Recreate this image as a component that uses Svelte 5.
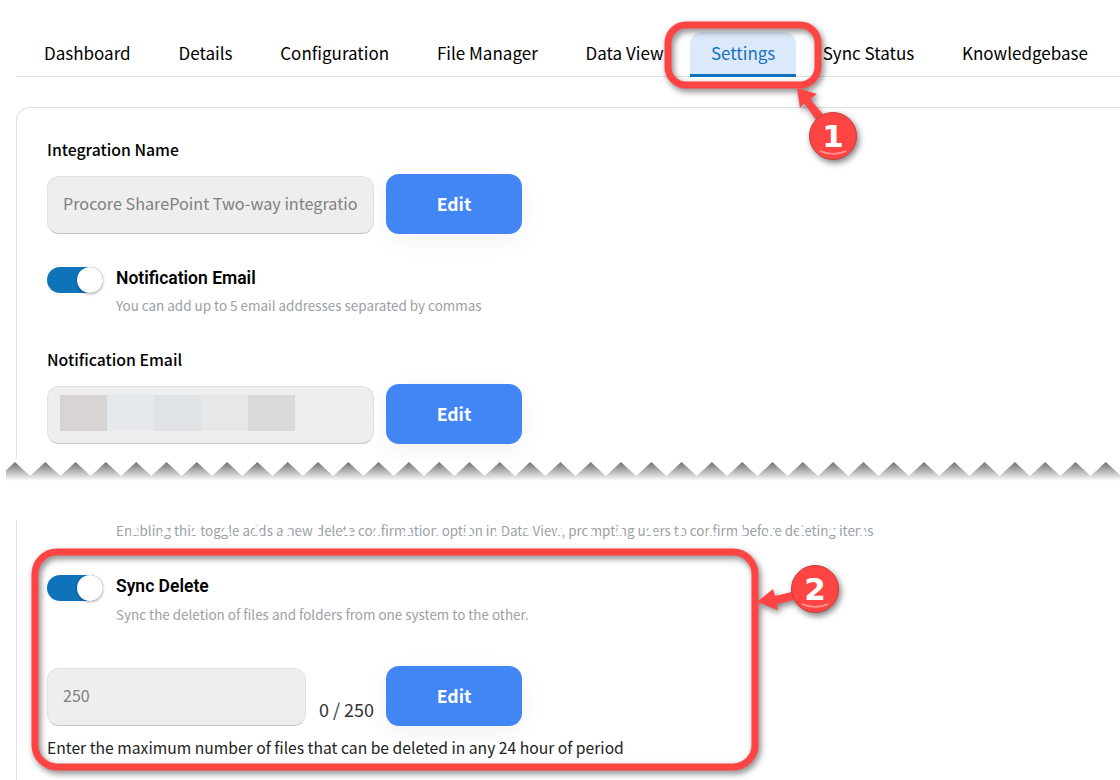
<script lang="ts">
  const tabs = ['Dashboard', 'Details', 'Configuration', 'File Manager', 'Data View', 'Settings', 'Sync Status', 'Knowledgebase'];
  const redacted = ['#d8d4d4', '#e6e9ec', '#dfe3e6', '#e6e7e7', '#dcdad9'];

  // zigzag of the torn paper edge, one tooth every 30.3px
  const tooth = 30.3;
  let edge = 'M-20 0';
  for (let i = 0; i < 40; i++) {
    const x = 15 + (i - 1) * tooth;
    edge += ` L${x} 4 L${x + tooth / 2} 18`;
  }
  edge += ' L1200 0 Z';
</script>

<div class="page">
  <nav class="tabs">
    {#each tabs as tab}
      <span class="tab" class:active={tab === 'Settings'}>{tab}</span>
    {/each}
  </nav>

  <section class="card">
    <div class="label">Integration Name</div>
    <div class="row">
      <input class="field" readonly value="Procore SharePoint Two-way integration" />
      <button class="edit">Edit</button>
    </div>

    <div class="switch-row">
      <span class="toggle"><span class="knob"></span></span>
      <div>
        <div class="switch-title">Notification Email</div>
        <div class="hint">You can add up to 5 email addresses separated by commas</div>
      </div>
    </div>

    <div class="label second">Notification Email</div>
    <div class="row">
      <div class="field redacted">
        {#each redacted as colour}
          <span class="blur" style="background: {colour}"></span>
        {/each}
      </div>
      <button class="edit">Edit</button>
    </div>
  </section>

  <svg class="tear" width="1120" height="30" viewBox="0 0 1120 30" aria-hidden="true">
    <defs>
      <linearGradient id="tear-shade" gradientUnits="userSpaceOnUse" x1="0" y1="4" x2="0" y2="23">
        <stop offset="0" stop-color="#707070" />
        <stop offset="1" stop-color="#fff" />
      </linearGradient>
    </defs>
    <rect x="6" y="0" width="1114" height="30" fill="url(#tear-shade)" />
    <path d={edge} fill="#fff" />
  </svg>

  <section class="lower">
    <div class="torn-text">Enabling this toggle adds a new delete confirmation option in Data View, prompting users to confirm before deleting items</div>

    <div class="switch-row sync">
      <span class="toggle"><span class="knob"></span></span>
      <div>
        <div class="switch-title">Sync Delete</div>
        <div class="hint">Sync the deletion of files and folders from one system to the other.</div>
      </div>
    </div>

    <div class="row limit">
      <input class="field short" readonly value="250" />
      <span class="count">0 / 250</span>
      <button class="edit">Edit</button>
    </div>
    <div class="help">Enter the maximum number of files that can be deleted in any 24 hour of period</div>
  </section>

  <svg class="marks" width="1120" height="780" viewBox="0 0 1120 780" aria-hidden="true">
    <g class="shadowed">
      <rect x="668" y="25" width="150" height="60" rx="18" class="frame" />
      <polygon points="797,88 817,94 810,99 826,118 819,124 804,103 800,108" class="red" />
      <circle cx="833" cy="136" r="23.5" class="badge" />
    </g>
    <path d="M820 151 Q833 157 846 151" class="glint" />
    <text x="833" y="147" class="num">1</text>

    <g class="shadowed">
      <rect x="35" y="552" width="720" height="215" rx="22" class="frame" />
      <polygon points="757,602 773,589 775,596 800,590 802,598 777,604 778,610" class="red" />
      <circle cx="815" cy="589" r="23.5" class="badge" />
    </g>
    <path d="M802 604 Q815 610 828 604" class="glint" />
    <text x="815" y="600" class="num">2</text>
  </svg>
</div>

<style>
  :global(body) {
    background: #fff;
  }

  .page {
    position: relative;
    width: 1120px;
    height: 780px;
    overflow: hidden;
    font-family: 'Noto Sans CJK JP', 'Noto Sans', sans-serif;
    color: #000;
  }

  .tabs {
    display: flex;
    gap: 5.85px;
    box-sizing: border-box;
    height: 45px;
    margin: 32px 0 0 16px;
    padding-left: 7px;
    width: 1120px;
    border-bottom: 1px solid #e0e0e6;
  }

  .tab {
    display: flex;
    align-items: center;
    padding: 0 21px 4px;
    height: 44px;
    box-sizing: border-box;
    font-size: 17px;
    white-space: nowrap;
  }

  .tab.active {
    height: 45px;
    padding: 0 20.5px 2px;
    color: #1673c0;
    background: #dce9fb;
    border-radius: 12px 12px 0 0;
    border-bottom: 3px solid #0f73c0;
  }

  .card {
    box-sizing: border-box;
    width: 1140px;
    margin: 30px 0 0 16px;
    padding: 31px 30px 18px;
    border: 1px solid #e0e0e0;
    border-bottom: 0;
    border-radius: 14px 14px 0 0;
  }

  .label {
    font-size: 15.8px;
    font-weight: 500;
    line-height: 22px;
    color: #000;
    margin-bottom: 13px;
  }

  .label.second {
    margin-top: 33px;
  }

  .row {
    display: flex;
    align-items: center;
    gap: 12px;
    height: 60px;
  }

  .field {
    box-sizing: border-box;
    width: 327px;
    height: 58px;
    margin-top: 2px;
    padding: 0 16px 4px 15px;
    background: #eee;
    border: 1px solid #e2e2e2;
    border-bottom-color: #c4c4c4;
    border-radius: 12px;
    font: 16.2px 'Noto Sans CJK JP', 'Noto Sans', sans-serif;
    color: #808080;
    outline: none;
  }

  .field.short {
    width: 259px;
    font-size: 16px;
  }

  .redacted {
    display: flex;
    padding: 8px 12px;
  }

  .blur {
    width: 47px;
    height: 36px;
  }

  .edit {
    width: 136px;
    height: 60px;
    padding: 0 0 2px;
    border: 0;
    border-radius: 13px;
    background: #4285f4;
    color: #fff;
    font: 600 17.6px 'Noto Sans CJK JP', 'Noto Sans', sans-serif;
    box-shadow: 0 6px 24px rgba(0, 0, 0, 0.06);
  }

  .switch-row {
    display: flex;
    gap: 13px;
    margin-top: 32px;
  }

  .toggle {
    position: relative;
    flex: none;
    width: 56px;
    height: 26px;
    margin-top: 1px;
    border-radius: 13px;
    background: #0f73b9;
  }

  .knob {
    position: absolute;
    top: 0;
    right: 0;
    width: 26px;
    height: 26px;
    border-radius: 50%;
    background: #fff;
    box-shadow: 0 1px 3px rgba(0, 0, 0, 0.35);
  }

  .switch-title {
    padding-top: 1px;
    font-family: Roboto, sans-serif;
    font-size: 17.5px;
    font-weight: 600;
    line-height: 22px;
    color: #000;
  }

  .hint {
    margin-top: 5px;
    font-size: 13.45px;
    line-height: 22px;
    color: #9aa0a6;
  }

  .tear {
    display: block;
    position: relative;
    margin-top: -4px;
  }

  .lower {
    box-sizing: border-box;
    height: 300px;
    margin: 45px 0 0 16px;
    padding-left: 30px;
    border-left: 1px solid #e0e0e0;
  }

  .torn-text {
    position: relative;
    width: max-content;
    margin: -13px 0 0 69px;
    font-size: 13.4px;
    line-height: 20px;
    color: #9aa0a6;
  }

  /* the tear bites small wedges out of this line */
  .torn-text::after {
    content: '';
    position: absolute;
    left: 0;
    right: 0;
    top: 5px;
    height: 10px;
    background: conic-gradient(from 155deg at 50% 0, #fff 50deg, transparent 0) 4px 0 / 30.3px 10px repeat-x;
  }

  .sync {
    margin-top: 34px;
  }

  .sync .hint {
    margin-top: 6px;
  }

  .limit {
    margin-top: 41px;
  }

  .count {
    align-self: flex-end;
    font-size: 18px;
    line-height: 30px;
    margin: 0 0 2px 1px;
    color: #333;
  }

  .help {
    margin-top: 11px;
    font-size: 15.66px;
    line-height: 22px;
    color: #222;
    white-space: nowrap;
  }

  .marks {
    position: absolute;
    left: 0;
    top: 0;
    pointer-events: none;
  }

  .shadowed {
    filter: drop-shadow(2px 3px 3px rgba(0, 0, 0, 0.5));
  }

  .frame {
    fill: none;
    stroke: #ff4444;
    stroke-width: 7;
  }

  .red {
    fill: #ff4444;
  }

  .badge {
    fill: #ff4444;
    stroke: #c83c3c;
    stroke-width: 1;
  }

  .glint {
    fill: none;
    stroke: #ff9a9a;
    stroke-width: 1.5;
  }

  .num {
    fill: #fff;
    font-family: 'DejaVu Sans', sans-serif;
    font-size: 31px;
    font-weight: 700;
    text-anchor: middle;
  }
</style>
